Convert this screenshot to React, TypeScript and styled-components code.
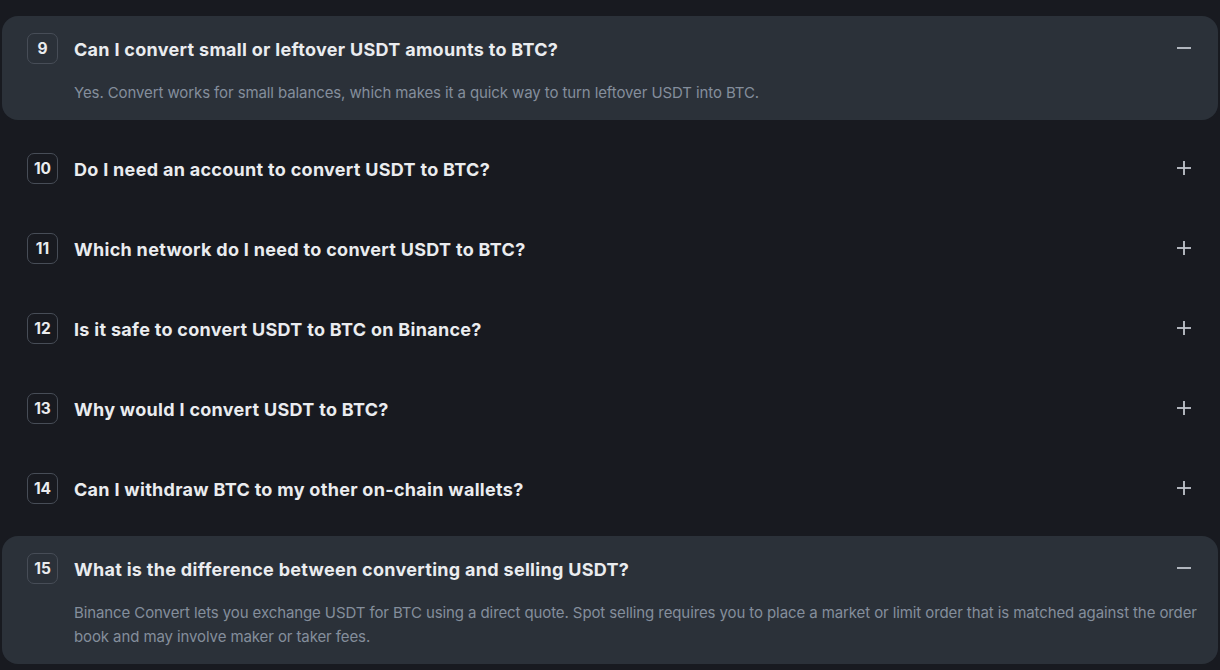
import React, { useState } from 'react';
import styled, { createGlobalStyle } from 'styled-components';

const GlobalStyle = createGlobalStyle`
	html, body {
		margin: 0;
		padding: 0;
		background-color: #181a20;
	}
	body {
		font-family: 'Inter', 'Noto Sans', sans-serif;
		-webkit-font-smoothing: antialiased;
	}
`;

const Page = styled.div`
	width: 1220px;
	height: 670px;
	overflow: hidden;
	box-sizing: border-box;
	padding: 16px 2px 0;
`;

const List = styled.div`
	display: flex;
	flex-direction: column;
	gap: 16px;
`;

const Item = styled.div<{ $open: boolean }>`
	background-color: ${(props) => (props.$open ? '#2b3139' : 'transparent')};
	border-radius: 16px;
	padding: 18px 16px ${(props) => (props.$open ? '15px' : '14px')} 24px;
`;

const Header = styled.div`
	display: flex;
	align-items: center;
	gap: 16px;
	height: 32px;
	cursor: pointer;
`;

const Badge = styled.div`
	flex: none;
	box-sizing: border-box;
	width: 31px;
	height: 31px;
	margin: 0 0 3px 1px;
	border: 1px solid #474d57;
	border-radius: 7px;
	display: flex;
	align-items: center;
	justify-content: center;
	color: #eaecef;
	font-size: 15.5px;
	font-weight: 700;
`;

const Question = styled.h3`
	flex: 1;
	margin: 0;
	color: #eaecef;
	font-size: 18px;
	line-height: 26px;
	font-weight: 700;
	letter-spacing: 0.3px;
`;

const Toggle = styled.span`
	flex: none;
	width: 20px;
	height: 20px;
	margin: 0 8px 4px 0;
	color: #c1c6cd;
	display: flex;
`;

const Answer = styled.p`
	margin: 15px 0 0 48px;
	color: #848e9c;
	font-size: 15px;
	line-height: 24px;
	font-weight: 400;
	letter-spacing: -0.1px;
`;

const faqs = [
	{
		n: 9,
		q: 'Can I convert small or leftover USDT amounts to BTC?',
		a: 'Yes. Convert works for small balances, which makes it a quick way to turn leftover USDT into BTC.',
	},
	{ n: 10, q: 'Do I need an account to convert USDT to BTC?', a: '' },
	{ n: 11, q: 'Which network do I need to convert USDT to BTC?', a: '' },
	{ n: 12, q: 'Is it safe to convert USDT to BTC on Binance?', a: '' },
	{ n: 13, q: 'Why would I convert USDT to BTC?', a: '' },
	{ n: 14, q: 'Can I withdraw BTC to my other on-chain wallets?', a: '' },
	{
		n: 15,
		q: 'What is the difference between converting and selling USDT?',
		a: 'Binance Convert lets you exchange USDT for BTC using a direct quote. Spot selling requires you to place a market or limit order that is matched against the order book and may involve maker or taker fees.',
	},
];

function Icon({ open }: { open: boolean }) {
	return (
		<svg width="20" height="20" viewBox="0 0 20 20" fill="none">
			<path d="M3 10h14" stroke="currentColor" strokeWidth="1.8" />
			{!open && <path d="M10 3v14" stroke="currentColor" strokeWidth="1.8" />}
		</svg>
	);
}

function App() {
	const [open, setOpen] = useState<number[]>([9, 15]);
	const toggle = (n: number) => {
		setOpen(open.includes(n) ? open.filter((x) => x !== n) : [...open, n]);
	};
	return (
		<Page>
			<GlobalStyle />
			<List>
				{faqs.map((f) => {
					const isOpen = open.includes(f.n);
					return (
						<Item key={f.n} $open={isOpen}>
							<Header onClick={() => toggle(f.n)}>
								<Badge>{f.n}</Badge>
								<Question>{f.q}</Question>
								<Toggle>
									<Icon open={isOpen} />
								</Toggle>
							</Header>
							{isOpen && f.a && <Answer>{f.a}</Answer>}
						</Item>
					);
				})}
			</List>
		</Page>
	);
}

export default App;
